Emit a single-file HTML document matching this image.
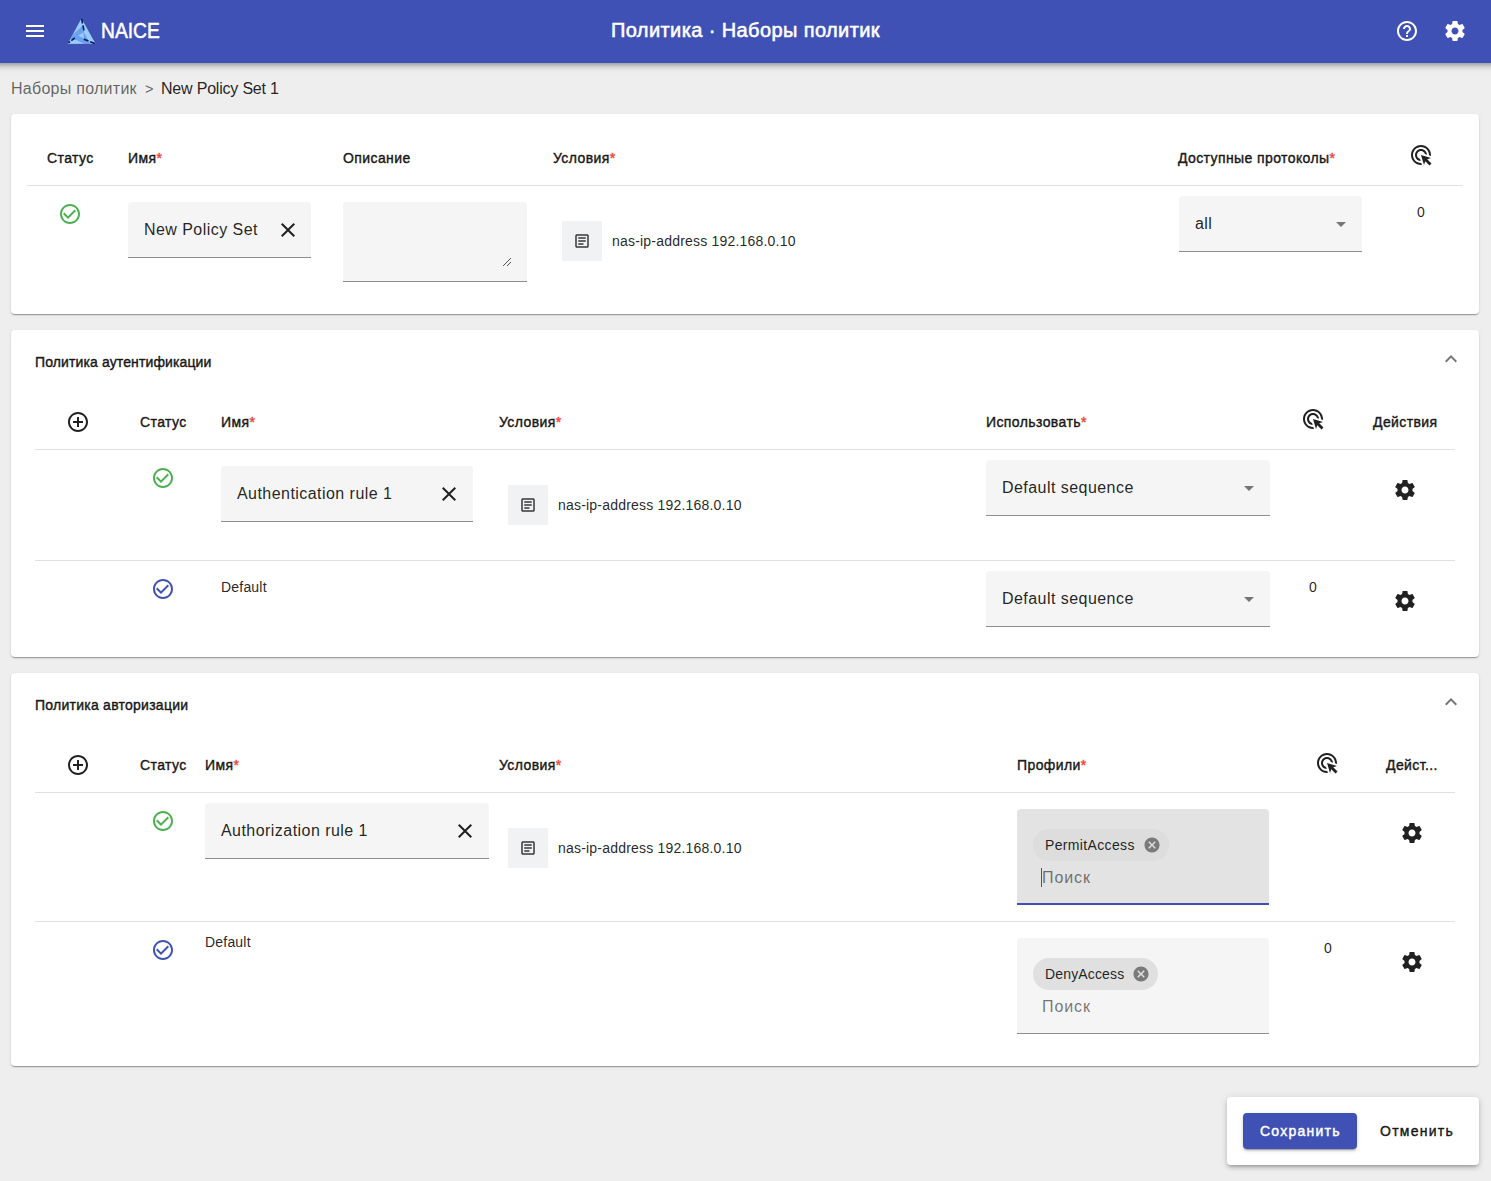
<!DOCTYPE html>
<html><head><meta charset="utf-8">
<style>
*{box-sizing:border-box;margin:0;padding:0}
html,body{width:1491px;height:1181px;overflow:hidden;background:#eeeeee;font-family:"Liberation Sans",sans-serif;color:rgba(0,0,0,.87)}
.a{position:absolute}
.t{position:absolute;white-space:nowrap;line-height:1}
.bar{left:-10px;top:0;width:1511px;height:63px;background:#3f51b5;box-shadow:0 2px 4px -1px rgba(0,0,0,.2),0 4px 5px 0 rgba(0,0,0,.14),0 1px 10px 0 rgba(0,0,0,.12);z-index:5}
.card{position:absolute;background:#fff;border-radius:4px;box-shadow:0 2px 1px -1px rgba(0,0,0,.2),0 1px 1px 0 rgba(0,0,0,.14),0 1px 3px 0 rgba(0,0,0,.12)}
.hd{font-size:14px;-webkit-text-stroke:0.45px;letter-spacing:0.4px;color:rgba(0,0,0,.87)}
.req{color:#f44336}
.div{position:absolute;height:1px;background:#e0e0e0}
.fld{position:absolute;background:#f5f5f5;border-radius:4px 4px 0 0;border-bottom:1px solid rgba(0,0,0,.42)}
.ftx{font-size:16px;letter-spacing:0.45px;color:rgba(0,0,0,.87)}
.cbox{position:absolute;width:40px;height:40px;background:#f1f2f4}
.ctx{font-size:14px;letter-spacing:0.2px}
svg{position:absolute;display:block}
</style></head><body>
<!-- toolbar -->
<div class="a bar">
  <svg style="left:33px;top:19px" width="24" height="24" viewBox="0 0 24 24"><path fill="#fff" d="M3 18h18v-2H3v2zm0-5h18v-2H3v2zm0-7v2h18V6H3z"/></svg>
  <svg style="left:74px;top:16px" width="36" height="30" viewBox="0 0 36 30">
    <polygon points="17.5,2.3 3.8,27.7 31.3,27.6" fill="#99ccfc"/>
    <polygon points="8.5,19 18.8,9.5 20,16 26,27.6 20,27.6 12,24 6.5,23" fill="#6c9fee"/>
    <polygon points="14.2,19.4 19.6,16.2 19.8,22.6" fill="#9acbfb"/>
    <polygon points="3.8,27.7 10,25 20,27.6" fill="#99ccfc"/>
    <polygon points="20,16 26.5,27.6 31.3,27.6 22,13" fill="#99ccfc"/>
    <path d="M17.6 2.6 L20.3 16.2" stroke="#07164f" stroke-width="1.6" stroke-dasharray="5 2" fill="none"/>
    <path d="M4.5 27 L14 19.3" stroke="#07164f" stroke-width="1.6" stroke-dasharray="2 1.6 4.5 9" fill="none"/>
    <path d="M19.8 23.2 L31 27.5" stroke="#07164f" stroke-width="1.6" stroke-dasharray="5 1.8 5" fill="none"/>
  </svg>
  <div class="t" style="left:110.5px;top:21px;font-size:21.5px;-webkit-text-stroke:0.5px #fff;color:#fff;transform:scaleX(.895);transform-origin:0 0">NAICE</div>
  <div class="t" style="left:621px;top:20px;font-size:20px;-webkit-text-stroke:0.55px #fff;color:#fff;letter-spacing:0.4px">Политика · Наборы политик</div>
  <svg style="left:1405px;top:19px" width="24" height="24" viewBox="0 0 24 24"><path fill="#fff" d="M11 18h2v-2h-2v2zm1-16C6.48 2 2 6.48 2 12s4.48 10 10 10 10-4.48 10-10S17.52 2 12 2zm0 18c-4.41 0-8-3.59-8-8s3.59-8 8-8 8 3.59 8 8-3.59 8-8 8zm0-14c-2.21 0-4 1.79-4 4h2c0-1.1.9-2 2-2s2 .9 2 2c0 2-3 1.75-3 5h2c0-2.25 3-2.5 3-5 0-2.21-1.79-4-4-4z"/></svg>
  <svg style="left:1453px;top:19px" width="24" height="24" viewBox="0 0 24 24"><path fill="#fff" d="M19.43 12.98c.04-.32.07-.64.07-.98s-.03-.66-.07-.98l2.11-1.65c.19-.15.24-.42.12-.64l-2-3.46c-.12-.22-.39-.3-.61-.22l-2.490 1c-.52-.4-1.08-.73-1.69-.98l-.38-2.65C14.46 2.18 14.25 2 14 2h-4c-.25 0-.46.18-.49.42l-.38 2.65c-.61.25-1.17.59-1.69.98l-2.49-1c-.23-.09-.49 0-.61.22l-2 3.46c-.13.22-.07.49.12.64l2.11 1.65c-.04.32-.07.65-.07.98s.03.66.07.98l-2.11 1.65c-.19.15-.24.42-.12.64l2 3.46c.12.22.39.3.61.22l2.49-1c.52.4 1.08.73 1.69.98l.38 2.65c.03.24.24.42.49.42h4c.25 0 .46-.18.49-.42l.38-2.65c.61-.25 1.17-.59 1.69-.98l2.49 1c.23.09.49 0 .61-.22l2-3.460c.12-.22.07-.49-.12-.64l-2.11-1.65zM12 15.5c-1.93 0-3.5-1.570-3.5-3.5s1.57-3.5 3.5-3.5 3.5 1.57 3.5 3.5-1.57 3.5-3.5 3.5z"/></svg>
</div>

<!-- breadcrumb -->
<div class="t" style="left:11px;top:81px;font-size:16px;letter-spacing:0.27px;color:rgba(0,0,0,.6)">Наборы политик</div>
<div class="t" style="left:145px;top:82px;font-size:14.5px;color:rgba(0,0,0,.6)">&gt;</div>
<div class="t" style="left:161px;top:81px;font-size:16px;letter-spacing:-0.2px;color:rgba(0,0,0,.87)">New Policy Set 1</div>

<!-- CARD 1 -->
<div class="card" style="left:11px;top:114px;width:1468px;height:200px"></div>
<div class="t hd" style="left:47px;top:151px">Статус</div>
<div class="t hd" style="left:128px;top:151px">Имя<span class="req">*</span></div>
<div class="t hd" style="left:343px;top:151px">Описание</div>
<div class="t hd" style="left:553px;top:151px">Условия<span class="req">*</span></div>
<div class="t hd" style="left:1178px;top:151px">Доступные протоколы<span class="req">*</span></div>
<div class="div" style="left:27px;top:185px;width:1436px"></div>
<svg style="left:1408.5px;top:142.5px" width="24" height="24" viewBox="0 0 24 24"><path fill="#212121" d="M11.71 17.99C8.53 17.84 6 15.22 6 12c0-3.31 2.69-6 6-6 3.22 0 5.84 2.53 5.99 5.71l-2.1-.63C15.48 9.31 13.89 8 12 8c-2.21 0-4 1.79-4 4 0 1.89 1.31 3.48 3.08 3.89l.63 2.1zM22 12c0 .3-.01.6-.04.9l-1.97-.59c.01-.1.01-.21.01-.31 0-4.42-3.58-8-8-8s-8 3.58-8 8 3.58 8 8 8c.1 0 .21 0 .31-.01l.59 1.97c-.3.03-.6.04-.9.04-5.52 0-10-4.48-10-10S6.48 2 12 2s10 4.48 10 10zm-3.77 4.26L22 15l-10-3 3 10 1.26-3.77 4.27 4.27 1.98-1.98-4.28-4.26z"/></svg>
<svg style="left:58px;top:202px" width="24" height="24" viewBox="0 0 24 24"><path fill="#4caf50" d="M16.59 7.58L10 14.17l-3.59-3.58L5 12l5 5 8-8zM12 2C6.48 2 2 6.48 2 12s4.48 10 10 10 10-4.48 10-10S17.52 2 12 2zm0 18c-4.42 0-8-3.58-8-8s3.58-8 8-8 8 3.58 8 8-3.58 8-8 8z"/></svg>
<div class="fld" style="left:128px;top:202px;width:183px;height:56px"></div>
<div class="t ftx" style="left:144px;top:222px">New Policy Set</div>
<svg style="left:276px;top:218px" width="24" height="24" viewBox="0 0 24 24"><path fill="#212121" d="M19 6.41L17.59 5 12 10.59 6.41 5 5 6.41 10.59 12 5 17.59 6.41 19 12 13.41 17.59 19 19 17.59 13.41 12z"/></svg>
<div class="fld" style="left:343px;top:202px;width:184px;height:80px"></div>
<svg style="left:502px;top:257px" width="10" height="10" viewBox="0 0 10 10"><path d="M1 9 L9 1 M5 9 L9 5" stroke="#555" stroke-width="1"/></svg>
<div class="cbox" style="left:562px;top:221px"></div>
<svg style="left:573px;top:232px" width="18" height="18" viewBox="0 0 24 24"><path fill="#383838" d="M19 5v14H5V5h14m0-2H5c-1.1 0-2 .9-2 2v14c0 1.1.9 2 2 2h14c1.1 0 2-.9 2-2V5c0-1.1-.9-2-2-2zM14 17H7v-2h7v2zm3-4H7v-2h10v2zm0-4H7V7h10v2z"/></svg>
<div class="t ctx" style="left:612px;top:234px">nas-ip-address 192.168.0.10</div>
<div class="fld" style="left:1179px;top:196px;width:183px;height:56px"></div>
<div class="t ftx" style="left:1195px;top:216px">all</div>
<svg style="left:1336px;top:222px" width="10" height="5" viewBox="0 0 10 5"><path fill="#757575" d="M0 0h10L5 5z"/></svg>
<div class="t" style="left:1417px;top:205px;font-size:14px">0</div>
<!-- CARD 2 -->
<div class="card" style="left:11px;top:330px;width:1468px;height:327px"></div>
<div class="t hd" style="left:35px;top:355px;letter-spacing:0.12px">Политика аутентификации</div>
<svg style="left:1439px;top:347px" width="24" height="24" viewBox="0 0 24 24"><path fill="rgba(0,0,0,.54)" d="M12 8l-6 6 1.41 1.41L12 10.83l4.59 4.58L18 14z"/></svg>
<svg style="left:66px;top:410px" width="24" height="24" viewBox="0 0 24 24"><path fill="#212121" d="M13 7h-2v4H7v2h4v4h2v-4h4v-2h-4V7zm-1-5C6.49 2 2 6.49 2 12s4.49 10 10 10 10-4.49 10-10S17.51 2 12 2zm0 18c-4.41 0-8-3.59-8-8s3.59-8 8-8 8 3.59 8 8-3.59 8-8 8z"/></svg>
<div class="t hd" style="left:140px;top:415px">Статус</div>
<div class="t hd" style="left:221px;top:415px">Имя<span class="req">*</span></div>
<div class="t hd" style="left:499px;top:415px">Условия<span class="req">*</span></div>
<div class="t hd" style="left:986px;top:415px">Использовать<span class="req">*</span></div>
<svg style="left:1300.5px;top:407px" width="24" height="24" viewBox="0 0 24 24"><path fill="#212121" d="M11.71 17.99C8.53 17.84 6 15.22 6 12c0-3.31 2.69-6 6-6 3.22 0 5.840 2.53 5.99 5.71l-2.1-.63C15.48 9.31 13.89 8 12 8c-2.21 0-4 1.79-4 4 0 1.89 1.31 3.48 3.08 3.89l.63 2.1zM22 12c0 .3-.01.6-.04.9l-1.97-.59c.01-.1.01-.21.01-.31 0-4.42-3.58-8-8-8s-8 3.58-8 8 3.58 8 8 8c.1 0 .21 0 .31-.01l.59 1.97c-.3.03-.6.04-.9.04-5.52 0-10-4.48-10-10S6.48 2 12 2s10 4.48 10 10zm-3.77 4.26L22 15l-10-3 3 10 1.26-3.77 4.27 4.27 1.98-1.98-4.28-4.26z"/></svg>
<div class="t hd" style="left:1373px;top:415px">Действия</div>
<div class="div" style="left:35px;top:449px;width:1420px"></div>
<svg style="left:150.5px;top:466px" width="24" height="24" viewBox="0 0 24 24"><path fill="#4caf50" d="M16.59 7.58L10 14.17l-3.59-3.58L5 12l5 5 8-8zM12 2C6.48 2 2 6.48 2 12s4.48 10 10 10 10-4.48 10-10S17.52 2 12 2zm0 18c-4.42 0-8-3.58-8-8s3.58-8 8-8 8 3.58 8 8-3.58 8-8 8z"/></svg>
<div class="fld" style="left:221px;top:466px;width:252px;height:56px"></div>
<div class="t ftx" style="left:237px;top:486px">Authentication rule 1</div>
<svg style="left:437px;top:482px" width="24" height="24" viewBox="0 0 24 24"><path fill="#212121" d="M19 6.41L17.59 5 12 10.59 6.41 5 5 6.41 10.59 12 5 17.59 6.41 19 12 13.41 17.59 19 19 17.59 13.41 12z"/></svg>
<div class="cbox" style="left:508px;top:485px"></div>
<svg style="left:519px;top:496px" width="18" height="18" viewBox="0 0 24 24"><path fill="#383838" d="M19 5v14H5V5h14m0-2H5c-1.1 0-2 .9-2 2v14c0 1.1.9 2 2 2h14c1.1 0 2-.9 2-2V5c0-1.1-.9-2-2-2zM14 17H7v-2h7v2zm3-4H7v-2h10v2zm0-4H7V7h10v2z"/></svg>
<div class="t ctx" style="left:558px;top:498px">nas-ip-address 192.168.0.10</div>
<div class="fld" style="left:986px;top:460px;width:284px;height:56px"></div>
<div class="t ftx" style="left:1002px;top:480px">Default sequence</div>
<svg style="left:1244px;top:486px" width="10" height="5" viewBox="0 0 10 5"><path fill="#757575" d="M0 0h10L5 5z"/></svg>
<svg style="left:1393px;top:478px" width="24" height="24" viewBox="0 0 24 24"><path fill="#212121" d="M19.43 12.98c.04-.32.07-.64.07-.98s-.03-.66-.07-.98l2.11-1.65c.19-.15.24-.42.12-.64l-2-3.46c-.12-.22-.39-.3-.61-.22l-2.490 1c-.52-.4-1.08-.73-1.69-.98l-.38-2.65C14.46 2.18 14.25 2 14 2h-4c-.25 0-.46.18-.49.42l-.38 2.65c-.61.25-1.17.59-1.69.98l-2.49-1c-.23-.09-.49 0-.61.22l-2 3.46c-.13.22-.07.49.12.64l2.11 1.65c-.04.32-.07.65-.07.98s.03.66.07.98l-2.11 1.65c-.19.15-.24.42-.12.64l2 3.46c.12.22.39.3.61.22l2.49-1c.52.4 1.08.73 1.69.98l.38 2.65c.03.24.24.42.49.42h4c.25 0 .46-.18.49-.42l.38-2.65c.61-.25 1.17-.59 1.69-.98l2.49 1c.23.09.49 0 .61-.22l2-3.460c.12-.22.07-.49-.12-.64l-2.11-1.65zM12 15.5c-1.93 0-3.5-1.57-3.5-3.5s1.57-3.5 3.5-3.5 3.5 1.57 3.5 3.5-1.57 3.5-3.5 3.5z"/></svg>
<div class="div" style="left:35px;top:560px;width:1420px"></div>
<svg style="left:150.5px;top:577px" width="24" height="24" viewBox="0 0 24 24"><path fill="#3f51b5" d="M16.59 7.58L10 14.17l-3.59-3.58L5 12l5 5 8-8zM12 2C6.48 2 2 6.48 2 12s4.48 10 10 10 10-4.48 10-10S17.52 2 12 2zm0 18c-4.42 0-8-3.58-8-8s3.58-8 8-8 8 3.58 8 8-3.58 8-8 8z"/></svg>
<div class="t ctx" style="left:221px;top:580px">Default</div>
<div class="fld" style="left:986px;top:571px;width:284px;height:56px"></div>
<div class="t ftx" style="left:1002px;top:591px">Default sequence</div>
<svg style="left:1244px;top:597px" width="10" height="5" viewBox="0 0 10 5"><path fill="#757575" d="M0 0h10L5 5z"/></svg>
<div class="t" style="left:1309px;top:580px;font-size:14px">0</div>
<svg style="left:1393px;top:589px" width="24" height="24" viewBox="0 0 24 24"><path fill="#212121" d="M19.43 12.98c.04-.32.07-.64.07-.98s-.03-.66-.07-.98l2.11-1.65c.19-.15.24-.42.12-.64l-2-3.46c-.12-.22-.39-.3-.61-.22l-2.490 1c-.52-.4-1.08-.73-1.69-.98l-.38-2.65C14.46 2.18 14.25 2 14 2h-4c-.25 0-.46.18-.49.42l-.38 2.65c-.61.25-1.17.59-1.69.98l-2.49-1c-.23-.09-.49 0-.61.22l-2 3.46c-.13.22-.07.49.12.64l2.11 1.65c-.04.32-.07.65-.07.98s.03.66.07.98l-2.11 1.65c-.19.15-.24.42-.12.64l2 3.46c.12.22.39.3.61.22l2.49-1c.52.4 1.08.73 1.69.98l.38 2.65c.03.24.24.42.49.42h4c.25 0 .46-.18.49-.42l.38-2.65c.61-.25 1.17-.59 1.69-.98l2.49 1c.23.09.49 0 .61-.22l2-3.460c.12-.22.07-.49-.12-.64l-2.11-1.65zM12 15.5c-1.93 0-3.5-1.57-3.5-3.5s1.57-3.5 3.5-3.5 3.5 1.57 3.5 3.5-1.57 3.5-3.5 3.5z"/></svg>
<!-- CARD 3 -->
<div class="card" style="left:11px;top:673px;width:1468px;height:393px"></div>
<div class="t hd" style="left:35px;top:698px;letter-spacing:0.25px">Политика авторизации</div>
<svg style="left:1439px;top:690px" width="24" height="24" viewBox="0 0 24 24"><path fill="rgba(0,0,0,.54)" d="M12 8l-6 6 1.41 1.41L12 10.83l4.59 4.58L18 14z"/></svg>
<svg style="left:66px;top:753px" width="24" height="24" viewBox="0 0 24 24"><path fill="#212121" d="M13 7h-2v4H7v2h4v4h2v-4h4v-2h-4V7zm-1-5C6.49 2 2 6.49 2 12s4.49 10 10 10 10-4.49 10-10S17.51 2 12 2zm0 18c-4.41 0-8-3.59-8-8s3.59-8 8-8 8 3.59 8 8-3.59 8-8 8z"/></svg>
<div class="t hd" style="left:140px;top:758px">Статус</div>
<div class="t hd" style="left:205px;top:758px">Имя<span class="req">*</span></div>
<div class="t hd" style="left:499px;top:758px">Условия<span class="req">*</span></div>
<div class="t hd" style="left:1017px;top:758px">Профили<span class="req">*</span></div>
<svg style="left:1315.3px;top:751px" width="24" height="24" viewBox="0 0 24 24"><path fill="#212121" d="M11.71 17.99C8.53 17.84 6 15.22 6 12c0-3.31 2.69-6 6-6 3.22 0 5.840 2.53 5.99 5.71l-2.1-.63C15.48 9.31 13.89 8 12 8c-2.21 0-4 1.79-4 4 0 1.89 1.31 3.48 3.08 3.89l.63 2.1zM22 12c0 .3-.01.6-.04.9l-1.97-.59c.01-.1.01-.21.01-.31 0-4.42-3.58-8-8-8s-8 3.58-8 8 3.58 8 8 8c.1 0 .21 0 .31-.01l.59 1.97c-.3.03-.6.04-.9.04-5.52 0-10-4.48-10-10S6.48 2 12 2s10 4.48 10 10zm-3.77 4.26L22 15l-10-3 3 10 1.26-3.77 4.27 4.27 1.98-1.98-4.28-4.26z"/></svg>
<div class="t hd" style="left:1386px;top:758px">Дейст...</div>
<div class="div" style="left:35px;top:792px;width:1420px"></div>
<svg style="left:150.5px;top:809px" width="24" height="24" viewBox="0 0 24 24"><path fill="#4caf50" d="M16.59 7.58L10 14.17l-3.59-3.58L5 12l5 5 8-8zM12 2C6.48 2 2 6.48 2 12s4.48 10 10 10 10-4.48 10-10S17.52 2 12 2zm0 18c-4.42 0-8-3.58-8-8s3.58-8 8-8 8 3.58 8 8-3.58 8-8 8z"/></svg>
<div class="fld" style="left:205px;top:803px;width:284px;height:56px"></div>
<div class="t ftx" style="left:221px;top:823px">Authorization rule 1</div>
<svg style="left:453px;top:819px" width="24" height="24" viewBox="0 0 24 24"><path fill="#212121" d="M19 6.41L17.59 5 12 10.59 6.41 5 5 6.41 10.59 12 5 17.59 6.41 19 12 13.41 17.59 19 19 17.59 13.41 12z"/></svg>
<div class="cbox" style="left:508px;top:828px"></div>
<svg style="left:519px;top:839px" width="18" height="18" viewBox="0 0 24 24"><path fill="#383838" d="M19 5v14H5V5h14m0-2H5c-1.1 0-2 .9-2 2v14c0 1.1.9 2 2 2h14c1.1 0 2-.9 2-2V5c0-1.1-.9-2-2-2zM14 17H7v-2h7v2zm3-4H7v-2h10v2zm0-4H7V7h10v2z"/></svg>
<div class="t ctx" style="left:558px;top:841px">nas-ip-address 192.168.0.10</div>
<div class="fld" style="left:1017px;top:809px;width:252px;height:96px;background:#e3e3e3;border-bottom:2px solid #3f51b5"></div>
<div class="a" style="left:1033px;top:829px;width:136px;height:32px;border-radius:16px;background:#dddddd"></div>
<div class="t ctx" style="left:1045px;top:838px;letter-spacing:0.35px">PermitAccess</div>
<svg style="left:1143px;top:836px" width="18" height="18" viewBox="0 0 24 24"><path fill="#7a7a7a" d="M12 2C6.47 2 2 6.47 2 12s4.47 10 10 10 10-4.47 10-10S17.53 2 12 2zm5 13.59L15.59 17 12 13.41 8.41 17 7 15.59 10.59 12 7 8.41 8.41 7 12 10.59 15.59 7 17 8.41 13.41 12 17 15.59z"/></svg>
<div class="a" style="left:1041px;top:868px;width:1px;height:19px;background:#3f51b5"></div>
<div class="t ftx" style="left:1042px;top:869.5px;color:rgba(0,0,0,.54);letter-spacing:0.9px">Поиск</div>
<svg style="left:1400px;top:821px" width="24" height="24" viewBox="0 0 24 24"><path fill="#212121" d="M19.43 12.98c.04-.32.07-.64.07-.98s-.03-.66-.07-.98l2.11-1.65c.19-.15.24-.42.12-.64l-2-3.46c-.12-.22-.39-.3-.61-.22l-2.490 1c-.52-.4-1.08-.73-1.69-.98l-.38-2.65C14.46 2.18 14.25 2 14 2h-4c-.25 0-.46.18-.49.42l-.38 2.65c-.61.25-1.17.59-1.69.98l-2.49-1c-.23-.09-.49 0-.61.22l-2 3.46c-.13.22-.07.49.12.64l2.11 1.65c-.04.32-.07.65-.07.98s.03.66.07.98l-2.11 1.65c-.19.15-.24.42-.12.64l2 3.46c.12.22.39.3.61.22l2.49-1c.52.4 1.08.73 1.69.98l.38 2.65c.03.24.24.42.49.42h4c.25 0 .46-.18.49-.42l.38-2.65c.61-.25 1.17-.59 1.69-.98l2.49 1c.23.09.49 0 .61-.22l2-3.460c.12-.22.07-.49-.12-.64l-2.11-1.65zM12 15.5c-1.93 0-3.5-1.57-3.5-3.5s1.57-3.5 3.5-3.5 3.5 1.57 3.5 3.5-1.57 3.5-3.5 3.5z"/></svg>
<div class="div" style="left:35px;top:921px;width:1420px"></div>
<svg style="left:150.5px;top:938px" width="24" height="24" viewBox="0 0 24 24"><path fill="#3f51b5" d="M16.59 7.58L10 14.17l-3.59-3.58L5 12l5 5 8-8zM12 2C6.48 2 2 6.48 2 12s4.48 10 10 10 10-4.48 10-10S17.52 2 12 2zm0 18c-4.42 0-8-3.58-8-8s3.58-8 8-8 8 3.58 8 8-3.58 8-8 8z"/></svg>
<div class="t ctx" style="left:205px;top:935px">Default</div>
<div class="fld" style="left:1017px;top:938px;width:252px;height:96px"></div>
<div class="a" style="left:1033px;top:958px;width:125px;height:32px;border-radius:16px;background:#e0e0e0"></div>
<div class="t ctx" style="left:1045px;top:967px;letter-spacing:0.15px">DenyAccess</div>
<svg style="left:1132px;top:965px" width="18" height="18" viewBox="0 0 24 24"><path fill="#7a7a7a" d="M12 2C6.47 2 2 6.47 2 12s4.47 10 10 10 10-4.47 10-10S17.53 2 12 2zm5 13.59L15.59 17 12 13.41 8.41 17 7 15.59 10.59 12 7 8.41 8.41 7 12 10.59 15.59 7 17 8.41 13.41 12 17 15.59z"/></svg>
<div class="t ftx" style="left:1042px;top:998.5px;color:rgba(0,0,0,.54);letter-spacing:0.9px">Поиск</div>
<div class="t" style="left:1324px;top:941px;font-size:14px">0</div>
<svg style="left:1400px;top:950px" width="24" height="24" viewBox="0 0 24 24"><path fill="#212121" d="M19.43 12.98c.04-.32.07-.64.07-.98s-.03-.66-.07-.98l2.11-1.65c.19-.15.24-.42.12-.64l-2-3.46c-.12-.22-.39-.3-.61-.22l-2.490 1c-.52-.4-1.08-.73-1.69-.98l-.38-2.65C14.46 2.18 14.25 2 14 2h-4c-.25 0-.46.18-.49.42l-.38 2.65c-.61.25-1.17.59-1.69.98l-2.49-1c-.23-.09-.49 0-.61.22l-2 3.46c-.13.22-.07.49.12.64l2.11 1.65c-.04.32-.07.65-.07.98s.03.66.07.98l-2.11 1.65c-.19.15-.24.42-.12.64l2 3.46c.12.22.39.3.61.22l2.49-1c.52.4 1.08.73 1.69.98l.38 2.65c.03.24.24.42.49.42h4c.25 0 .46-.18.49-.42l.38-2.65c.61-.25 1.17-.59 1.69-.98l2.49 1c.23.09.49 0 .61-.22l2-3.460c.12-.22.07-.49-.12-.64l-2.11-1.65zM12 15.5c-1.93 0-3.5-1.57-3.5-3.5s1.57-3.5 3.5-3.5 3.5 1.57 3.5 3.5-1.57 3.5-3.5 3.5z"/></svg>
<!-- ACTIONS -->
<div class="card" style="left:1227px;top:1097px;width:252px;height:68px;box-shadow:0 3px 3px -2px rgba(0,0,0,.2),0 3px 4px 0 rgba(0,0,0,.14),0 1px 8px 0 rgba(0,0,0,.12)"></div>
<div class="a" style="left:1243px;top:1113px;width:114px;height:36px;border-radius:4px;background:#3f51b5;box-shadow:0 3px 1px -2px rgba(0,0,0,.2),0 2px 2px 0 rgba(0,0,0,.14),0 1px 5px 0 rgba(0,0,0,.12)"></div>
<div class="t" style="left:1260px;top:1124px;font-size:14px;-webkit-text-stroke:0.45px;color:#fff;letter-spacing:1.25px">Сохранить</div>
<div class="t" style="left:1380px;top:1124px;font-size:14px;-webkit-text-stroke:0.45px;color:rgba(0,0,0,.87);letter-spacing:1.25px">Отменить</div>
</body></html>
